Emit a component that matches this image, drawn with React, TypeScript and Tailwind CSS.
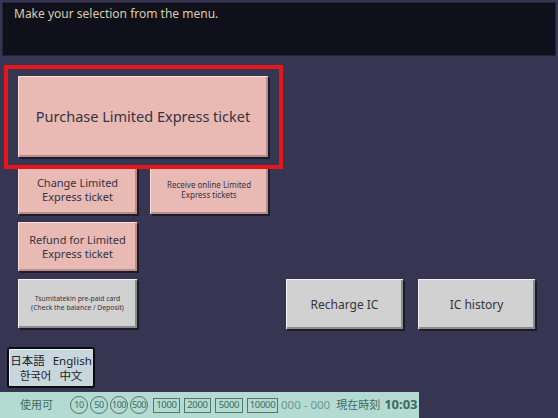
import React from "react";

const pink =
  "bg-[#e9b9b4] shadow-[inset_1px_1px_0_#f8dedb,inset_-2px_-2px_0_#b88e8b,2px_2px_0_#1c1b2b]";
const gray =
  "bg-[#d1d1d1] shadow-[inset_1px_1px_0_#f2f2f2,inset_-2px_-2px_0_#8c8c8c,2px_2px_0_#1c1b2b]";

function Btn({
  tone,
  className,
  children,
}: {
  tone: "pink" | "gray";
  className: string;
  children: React.ReactNode;
}) {
  return (
    <div
      className={`flex items-center justify-center text-center text-[#34343f] leading-tight ${
        tone === "pink" ? pink : gray
      } ${className}`}
    >
      {children}
    </div>
  );
}

function Coin({ v }: { v: string }) {
  return (
    <span className="flex h-[18px] w-[18px] shrink-0 items-center justify-center rounded-full border border-[#4f776e] text-[9px] tracking-[-0.5px]">
      {v}
    </span>
  );
}

function Bill({ v, w }: { v: string; w: string }) {
  return (
    <span className={`flex h-[15px] shrink-0 items-center justify-center border border-[#4f776e] text-[9.5px] tracking-[-0.3px] ${w}`}>
      {v}
    </span>
  );
}

export default function App() {
  return (
    <div className="relative flex h-[418px] w-[558px] flex-col overflow-hidden bg-[#363552] font-['Noto_Sans','Noto_Sans_CJK_JP',sans-serif]">
      {/* message panel */}
      <div className="mx-[2px] mt-[2px] h-[54px] border border-[#24233a] bg-[#10101a] px-[11px] pt-[2px] text-[12px] text-[#d6cfaf]">
        Make your selection from the menu.
      </div>

      <div className="flex flex-col gap-[8px] pl-[18px] pt-[20px]">
        <Btn tone="pink" className="h-[81px] w-[250px] text-[14.5px]">
          Purchase Limited Express ticket
        </Btn>

        <div className="flex gap-[13px]">
          <Btn tone="pink" className="h-[49px] w-[119px] text-[11px]">
            Change Limited
            <br />
            Express ticket
          </Btn>
          <Btn tone="pink" className="h-[49px] w-[118px] text-[8px]">
            Receive online Limited
            <br />
            Express tickets
          </Btn>
        </div>

        <Btn tone="pink" className="h-[49px] w-[119px] text-[11px]">
          Refund for Limited
          <br />
          Express ticket
        </Btn>

        <div className="flex">
          <Btn tone="gray" className="h-[49px] w-[119px] text-[6.8px]">
            Tsumitatekin pre-paid card
            <br />
            (Check the balance / Deposit)
          </Btn>
          <div className="ml-[149px] flex gap-[15px]">
            <Btn tone="gray" className="h-[50px] w-[117px] text-[12px]">
              Recharge IC
            </Btn>
            <Btn tone="gray" className="h-[50px] w-[117px] text-[12px]">
              IC history
            </Btn>
          </div>
        </div>
      </div>

      {/* language */}
      <div className="ml-[7px] mt-[18px] flex h-[41px] w-[88px] flex-col items-center justify-center rounded-[3px] border-2 border-[#0c0c10] bg-[#c8d6dd] text-[11.5px] leading-[15px] text-[#22222a] shadow-[inset_1px_1px_0_#eef4f6]">
        <div className="flex gap-[8px]">
          <span>日本語</span>
          <span>English</span>
        </div>
        <div className="flex gap-[8px] font-['Noto_Sans_CJK_KR',sans-serif]">
          <span>한국어</span>
          <span className="font-['Noto_Sans_CJK_SC',sans-serif]">中文</span>
        </div>
      </div>

      {/* status bar */}
      <div className="mt-auto flex h-[26px] w-[419px] items-center overflow-hidden whitespace-nowrap bg-[#b3dbd1] pl-[20px] text-[#3f6a61]">
        <span className="shrink-0 text-[11px]">使用可</span>
        <div className="ml-[17px] flex items-center gap-[2px]">
          <Coin v="10" />
          <Coin v="50" />
          <Coin v="100" />
          <Coin v="500" />
        </div>
        <div className="ml-[5px] flex items-center gap-[4px]">
          <Bill v="1000" w="w-[27px]" />
          <Bill v="2000" w="w-[27px]" />
          <Bill v="5000" w="w-[28px]" />
          <Bill v="10000" w="w-[31px]" />
        </div>
        <span className="ml-[3px] shrink-0 text-[11.5px] text-[#6e9890]">000 - 000</span>
        <span className="ml-[6px] shrink-0 text-[11px]">現在時刻</span>
        <span className="ml-[4px] shrink-0 text-[13px] font-bold">10:03</span>
      </div>

      {/* highlight frame */}
      <div className="pointer-events-none absolute left-[4px] top-[65px] h-[104px] w-[279px] border-4 border-[#e8161a]" />
    </div>
  );
}
